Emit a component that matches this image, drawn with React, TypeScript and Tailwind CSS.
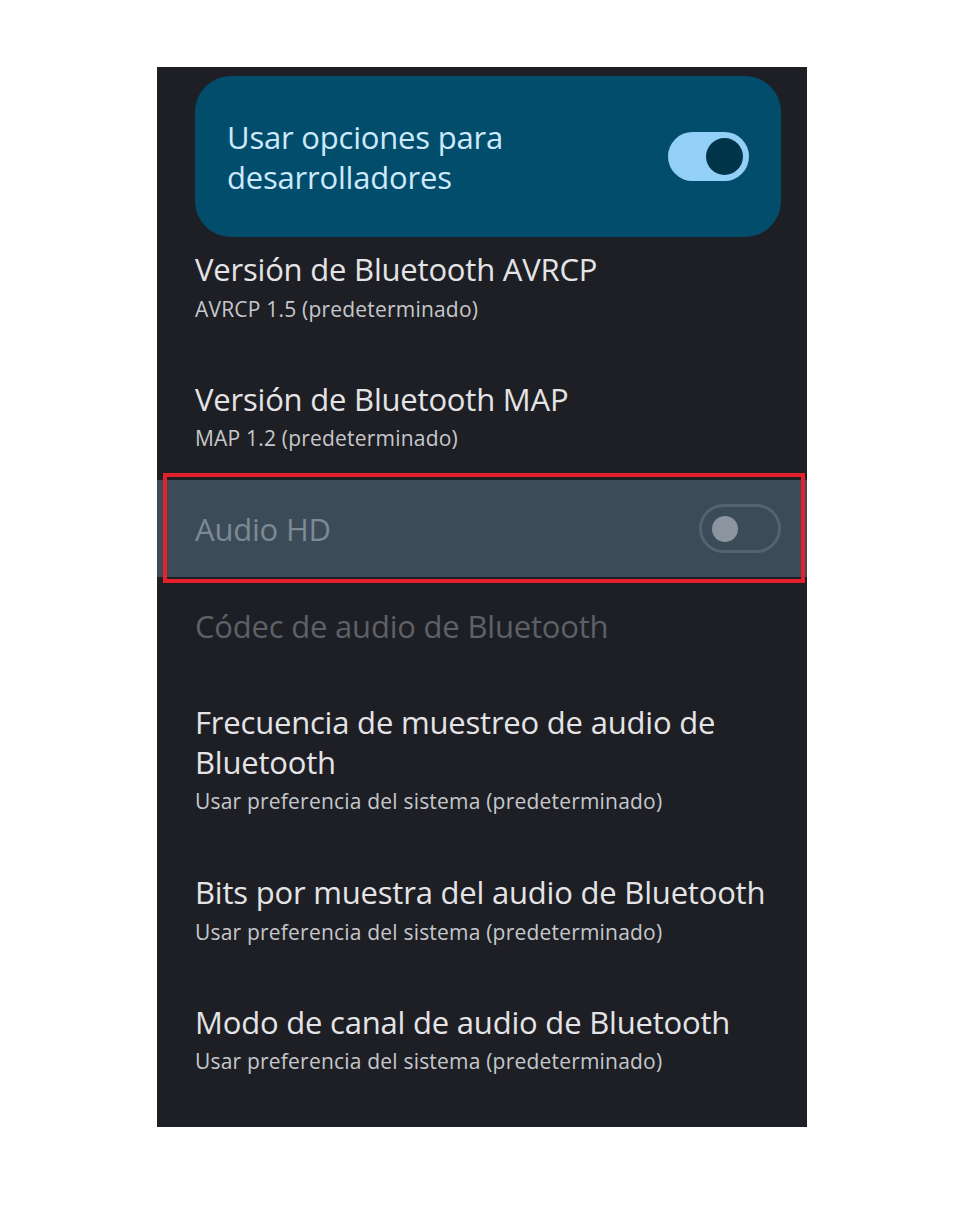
import React from 'react';

const sans = { fontFamily: '"Open Sans", Roboto, sans-serif' };

interface ItemProps {
  title: React.ReactNode;
  subtitle?: string;
  className?: string;
  subClass?: string;
  disabled?: boolean;
}

const Item: React.FC<ItemProps> = ({ title, subtitle, className = '', subClass = 'mt-[4px]', disabled }) => (
  <div className={`pl-[38px] pr-[26px] ${className}`}>
    <div
      className={`text-[31px] leading-[40px] tracking-[-0.2px] ${disabled ? 'text-[#5d6167]' : 'text-[#e4e4e7]'}`}
      style={sans}
    >
      {title}
    </div>
    {subtitle && (
      <div className={`text-[21px] leading-[32px] text-[#c5c7cc] tracking-[0.2px] ${subClass}`} style={sans}>
        {subtitle}
      </div>
    )}
  </div>
);

export default function App() {
  return (
    <div className="min-h-[1207px] w-full bg-white flex items-start pl-[157px] pt-[67px]">
      <div className="w-[650px] bg-[#1e1f24] flex flex-col">
        {/* main switch card */}
        <div className="ml-[38px] mr-[26px] mt-[9px] h-[161px] rounded-[36px] bg-[#024d6b] px-[32px] flex items-center justify-between">
          <div className="text-[31px] leading-[40px] text-[#cde9fb] tracking-[-0.2px]" style={sans}>
            Usar opciones para
            <br />
            desarrolladores
          </div>
          <div className="w-[81px] h-[49px] rounded-full bg-[#93d0f7] flex items-center justify-end pr-[6px]">
            <div className="w-[37px] h-[37px] rounded-full bg-[#003549]" />
          </div>
        </div>

        <Item
          className="pt-[12px] pb-[27px]"
          title="Versión de Bluetooth AVRCP"
          subtitle="AVRCP 1.5 (predeterminado)"
        />
        <Item
          className="pt-[27px] pb-[26px]"
          subClass="mt-[3px]"
          title="Versión de Bluetooth MAP"
          subtitle="MAP 1.2 (predeterminado)"
        />

        {/* highlighted disabled row */}
        <div className="relative h-[97px] bg-[#3c4b58] pl-[38px] pr-[26px] flex items-center justify-between">
          <div className="text-[31px] leading-[40px] text-[#7d8994] tracking-[-0.2px]" style={sans}>
            Audio HD
          </div>
          <div className="w-[82px] h-[49px] rounded-full border-[3px] border-[#56636e] flex items-center pl-[10px]">
            <div className="w-[26px] h-[26px] rounded-full bg-[#8a959f]" />
          </div>
          <div className="absolute left-[6px] right-[2px] top-[-7px] bottom-[-6px] border-[4px] border-[#e3202b] pointer-events-none" />
        </div>

        <Item className="pt-[29px] pb-[28px]" title="Códec de audio de Bluetooth" disabled />
        <Item
          className="pt-[28px] pb-[27px]"
          subClass="mt-[3px]"
          title={
            <>
              Frecuencia de muestreo de audio de
              <br />
              Bluetooth
            </>
          }
          subtitle="Usar preferencia del sistema (predeterminado)"
        />
        <Item
          className="pt-[28px] pb-[27px]"
          title="Bits por muestra del audio de Bluetooth"
          subtitle="Usar preferencia del sistema (predeterminado)"
        />
        <Item
          className="pt-[27px] pb-[50px]"
          subClass="mt-[3px]"
          title="Modo de canal de audio de Bluetooth"
          subtitle="Usar preferencia del sistema (predeterminado)"
        />
      </div>
    </div>
  );
}
